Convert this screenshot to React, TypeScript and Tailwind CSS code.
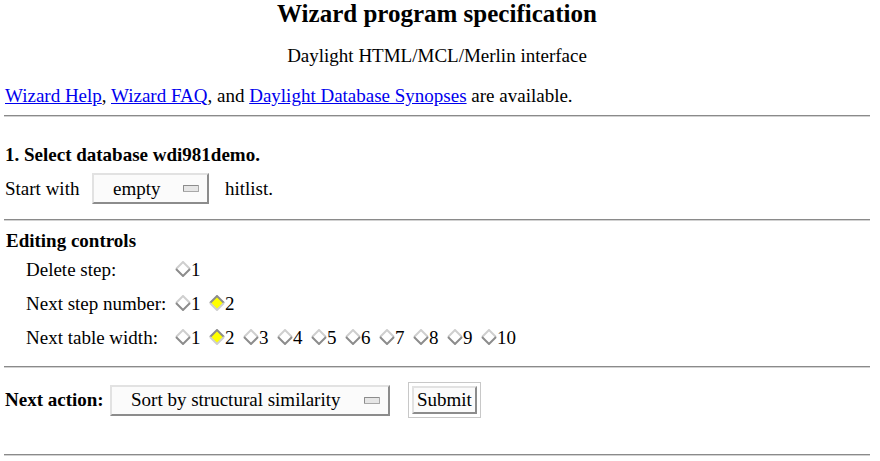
import React from 'react';

// motif-style diamond radio
function Diamond({ on }: { on?: boolean }) {
    const hi = on ? '#8c8c8c' : '#cfcfcf';
    const lo = on ? '#cfcfcf' : '#8c8c8c';
    return (
        <svg width="16" height="16" viewBox="0 0 16 16" className="shrink-0 -mt-[3px]">
            <polygon points="8,1 15,8 8,15 1,8" fill={on ? '#ffff00' : 'none'} />
            <polyline points="1,8 8,1 15,8" fill="none" stroke={hi} strokeWidth="2" />
            <polyline points="1,8 8,15 15,8" fill="none" stroke={lo} strokeWidth="2" />
        </svg>
    );
}

function Radios({ count, selected }: { count: number; selected?: number }) {
    return (
        <div className="flex items-center">
            {Array.from({ length: count }, (_, i) => (
                <div key={i} className="flex items-center w-[34px]">
                    <Diamond on={selected === i + 1} />
                    <span>{i + 1}</span>
                </div>
            ))}
        </div>
    );
}

function Select({ label, width, textPad }: { label: string; width: string; textPad: string }) {
    return (
        <div className={`flex items-center justify-between h-[31px] bg-[#fbfbfb] border-2 border-t-[#e2e2e2] border-l-[#e2e2e2] border-r-[#8c8c8c] border-b-[#8c8c8c] pr-[8px] ${width} ${textPad}`}>
            <span>{label}</span>
            <span className="w-[16px] h-[7px] rounded-[1px] bg-[#e6e6e6] border border-t-[#8c8c8c] border-l-[#8c8c8c] border-r-[#a8a8a8] border-b-[#a8a8a8]" />
        </div>
    );
}

function Rule({ className = '' }: { className?: string }) {
    return <div className={`ml-[4px] mr-[10px] h-[2px] border-t border-t-[#8a8a8a] border-b border-b-[#d2d2d2] ${className}`} />;
}

export default function App() {
    return (
        <div className="w-[880px] h-[461px] overflow-hidden bg-white text-black text-[19px] leading-[24px] font-['Liberation_Serif',serif]">
            <div className="mr-[6px] text-center font-bold text-[25px] leading-[28px]">Wizard program specification</div>
            <div className="mt-[16px] mr-[6px] text-center">Daylight HTML/MCL/Merlin interface</div>
            <div className="mt-[16px] pl-[5px]">
                <a href="#" className="text-[#0000ee] underline">Wizard Help</a>,{' '}
                <a href="#" className="text-[#0000ee] underline">Wizard FAQ</a>, and{' '}
                <a href="#" className="text-[#0000ee] underline">Daylight Database Synopses</a> are available.
            </div>
            <Rule className="mt-[7px]" />

            <div className="mt-[26px] pl-[5px] font-bold">1. Select database wdi981demo.</div>
            <div className="mt-[6px] pl-[5px] flex items-center">
                <span className="w-[87px]">Start with</span>
                <Select label="empty" width="w-[117px]" textPad="pl-[19px]" />
                <span className="ml-[16px]">hitlist.</span>
            </div>
            <Rule className="mt-[15px]" />

            <div className="mt-[8px] pl-[6px] font-bold">Editing controls</div>
            <div className="pl-[26px]">
                <div className="flex items-center h-[34px]">
                    <span className="w-[149px]">Delete step:</span>
                    <Radios count={1} />
                </div>
                <div className="flex items-center h-[34px]">
                    <span className="w-[149px]">Next step number:</span>
                    <Radios count={2} selected={2} />
                </div>
                <div className="flex items-center h-[34px]">
                    <span className="w-[149px]">Next table width:</span>
                    <Radios count={10} selected={2} />
                </div>
            </div>
            <Rule className="mt-[11px]" />

            <div className="mt-[14px] pl-[5px] flex items-center h-[36px]">
                <span className="w-[105px] font-bold">Next action:</span>
                <Select label="Sort by structural similarity" width="w-[280px]" textPad="pl-[19px]" />
                <div className="ml-[18px] p-[3px] border border-[#c8c8c8]">
                    <button className="h-[28px] px-[3px] bg-[#fbfbfb] border-2 border-t-[#e2e2e2] border-l-[#e2e2e2] border-r-[#8c8c8c] border-b-[#8c8c8c] leading-[22px]">
                        Submit
                    </button>
                </div>
            </div>
            <Rule className="mt-[36px]" />
        </div>
    );
}
